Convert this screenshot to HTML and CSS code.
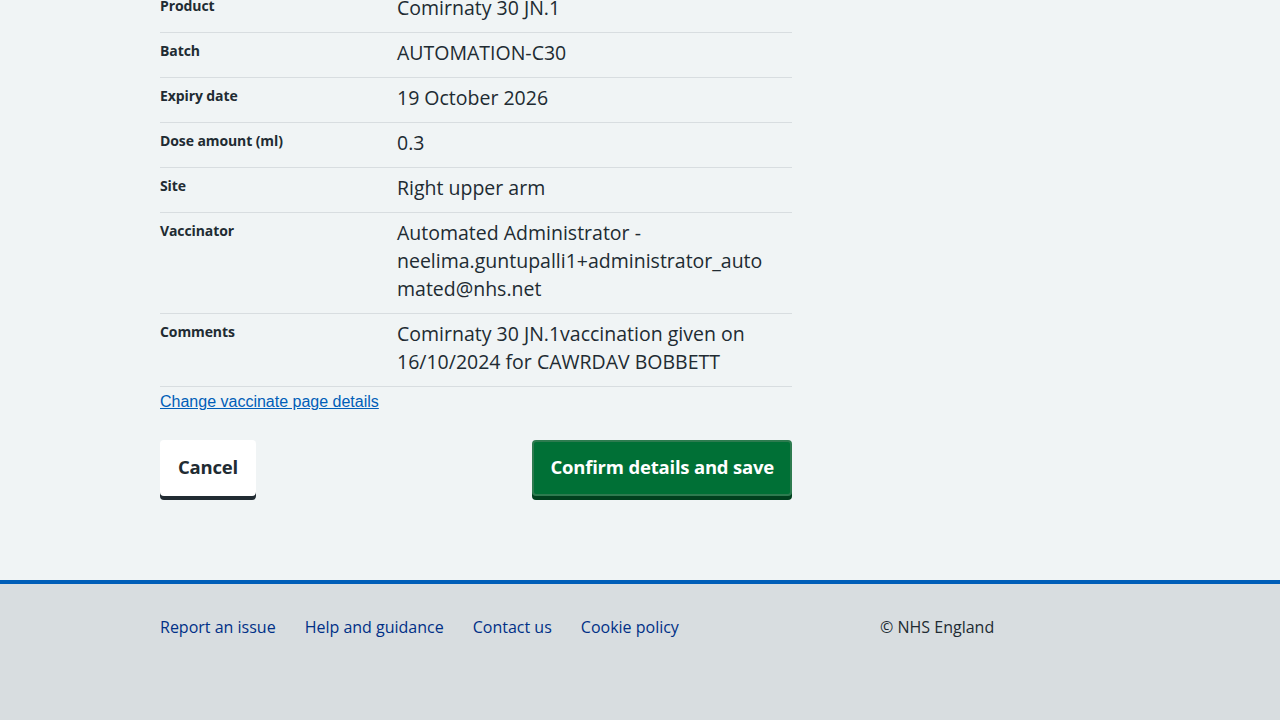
FILE: index.html
```html
<!DOCTYPE html>
<html lang="en">
<head>
<meta charset="utf-8">
<title>Check and confirm</title>
<link rel="stylesheet" href="styles.css">
</head>
<body>
<main class="page">
  <div class="column">
    <dl class="summary">
      <div class="row"><dt class="key">Product</dt><dd class="value">Comirnaty 30 JN.1</dd></div>
      <div class="row"><dt class="key">Batch</dt><dd class="value">AUTOMATION-C30</dd></div>
      <div class="row"><dt class="key">Expiry date</dt><dd class="value">19 October 2026</dd></div>
      <div class="row"><dt class="key">Dose amount (ml)</dt><dd class="value">0.3</dd></div>
      <div class="row"><dt class="key">Site</dt><dd class="value">Right upper arm</dd></div>
      <div class="row"><dt class="key">Vaccinator</dt><dd class="value">Automated Administrator - neelima.guntupalli1+administrator_automated@nhs.net</dd></div>
      <div class="row"><dt class="key">Comments</dt><dd class="value">Comirnaty 30 JN.1vaccination given on 16/10/2024 for CAWRDAV BOBBETT</dd></div>
    </dl>
    <a class="change-link" href="#">Change vaccinate page details</a>
    <div class="actions">
      <button class="btn btn-secondary" type="button">Cancel</button>
      <button class="btn btn-primary" type="button">Confirm details and save</button>
    </div>
  </div>
</main>
<footer class="footer">
  <div class="footer-inner">
    <ul class="footer-links">
      <li><a href="#">Report an issue</a></li>
      <li><a href="#">Help and guidance</a></li>
      <li><a href="#">Contact us</a></li>
      <li><a href="#">Cookie policy</a></li>
    </ul>
    <p class="copyright">© NHS England</p>
  </div>
</footer>
</body>
</html>
```
FILE: styles.css
```css
* { box-sizing: border-box; }
html, body { margin: 0; padding: 0; }
body {
  background: #f0f4f5;
  color: #212b32;
  font-family: "Open Sans", "Noto Sans", "Liberation Sans", sans-serif;
  height: 720px;
  overflow: hidden;
  display: flex;
  flex-direction: column;
}
.page {
  width: 960px;
  margin: 0 auto;
  padding-bottom: 84px;
}
.column {
  width: 632px;
  margin-top: -12px;
}
.summary { margin: 0; }
.row {
  display: grid;
  grid-template-columns: 237px minmax(0, 1fr);
  border-bottom: 1px solid #d8dde0;
  padding: 8px 0;
}
.key {
  margin: 0;
  font-weight: 700;
  font-size: 14px;
  line-height: 20px;
  letter-spacing: -0.1px;
}
.value {
  margin: -2px 0 2px;
  min-width: 0;
  padding-right: 16px;
  font-size: 19.5px;
  line-height: 28px;
  overflow-wrap: break-word;
}
.change-link {
  display: inline-block;
  margin-top: 6px;
  font-family: "Liberation Sans", Arial, sans-serif;
  font-size: 16px;
  line-height: 18px;
  color: #005eb8;
  text-decoration: underline;
}
.actions {
  display: flex;
  justify-content: space-between;
  margin-top: 28px;
}
.btn {
  font-family: inherit;
  font-weight: 700;
  font-size: 18.5px;
  line-height: 24px;
  height: 56px;
  padding: 0 16px 3px;
  border-radius: 4px;
  border: 2px solid transparent;
  cursor: pointer;
  letter-spacing: -0.2px;
}
.btn-secondary {
  background: #ffffff;
  color: #212b32;
  box-shadow: 0 4px 0 #212b32;
}
.btn-primary {
  background: #007036;
  color: #ffffff;
  border-color: #2d7b4f;
  box-shadow: 0 4px 0 #00401e;
}
.footer {
  flex: 1;
  background: #d8dde0;
  border-top: 4px solid #005eb8;
}
.footer-inner {
  width: 960px;
  margin: 0 auto;
  padding-top: 31px;
  display: flex;
}
.footer-links {
  width: 75%;
  list-style: none;
  margin: 0;
  padding: 0;
  display: flex;
  gap: 29px;
}
.footer-links a {
  color: #003087;
  text-decoration: none;
  font-size: 16px;
  line-height: 24px;
}
.copyright {
  width: 25%;
  margin: 0;
  font-size: 16px;
  line-height: 24px;
  color: #212b32;
}
```
